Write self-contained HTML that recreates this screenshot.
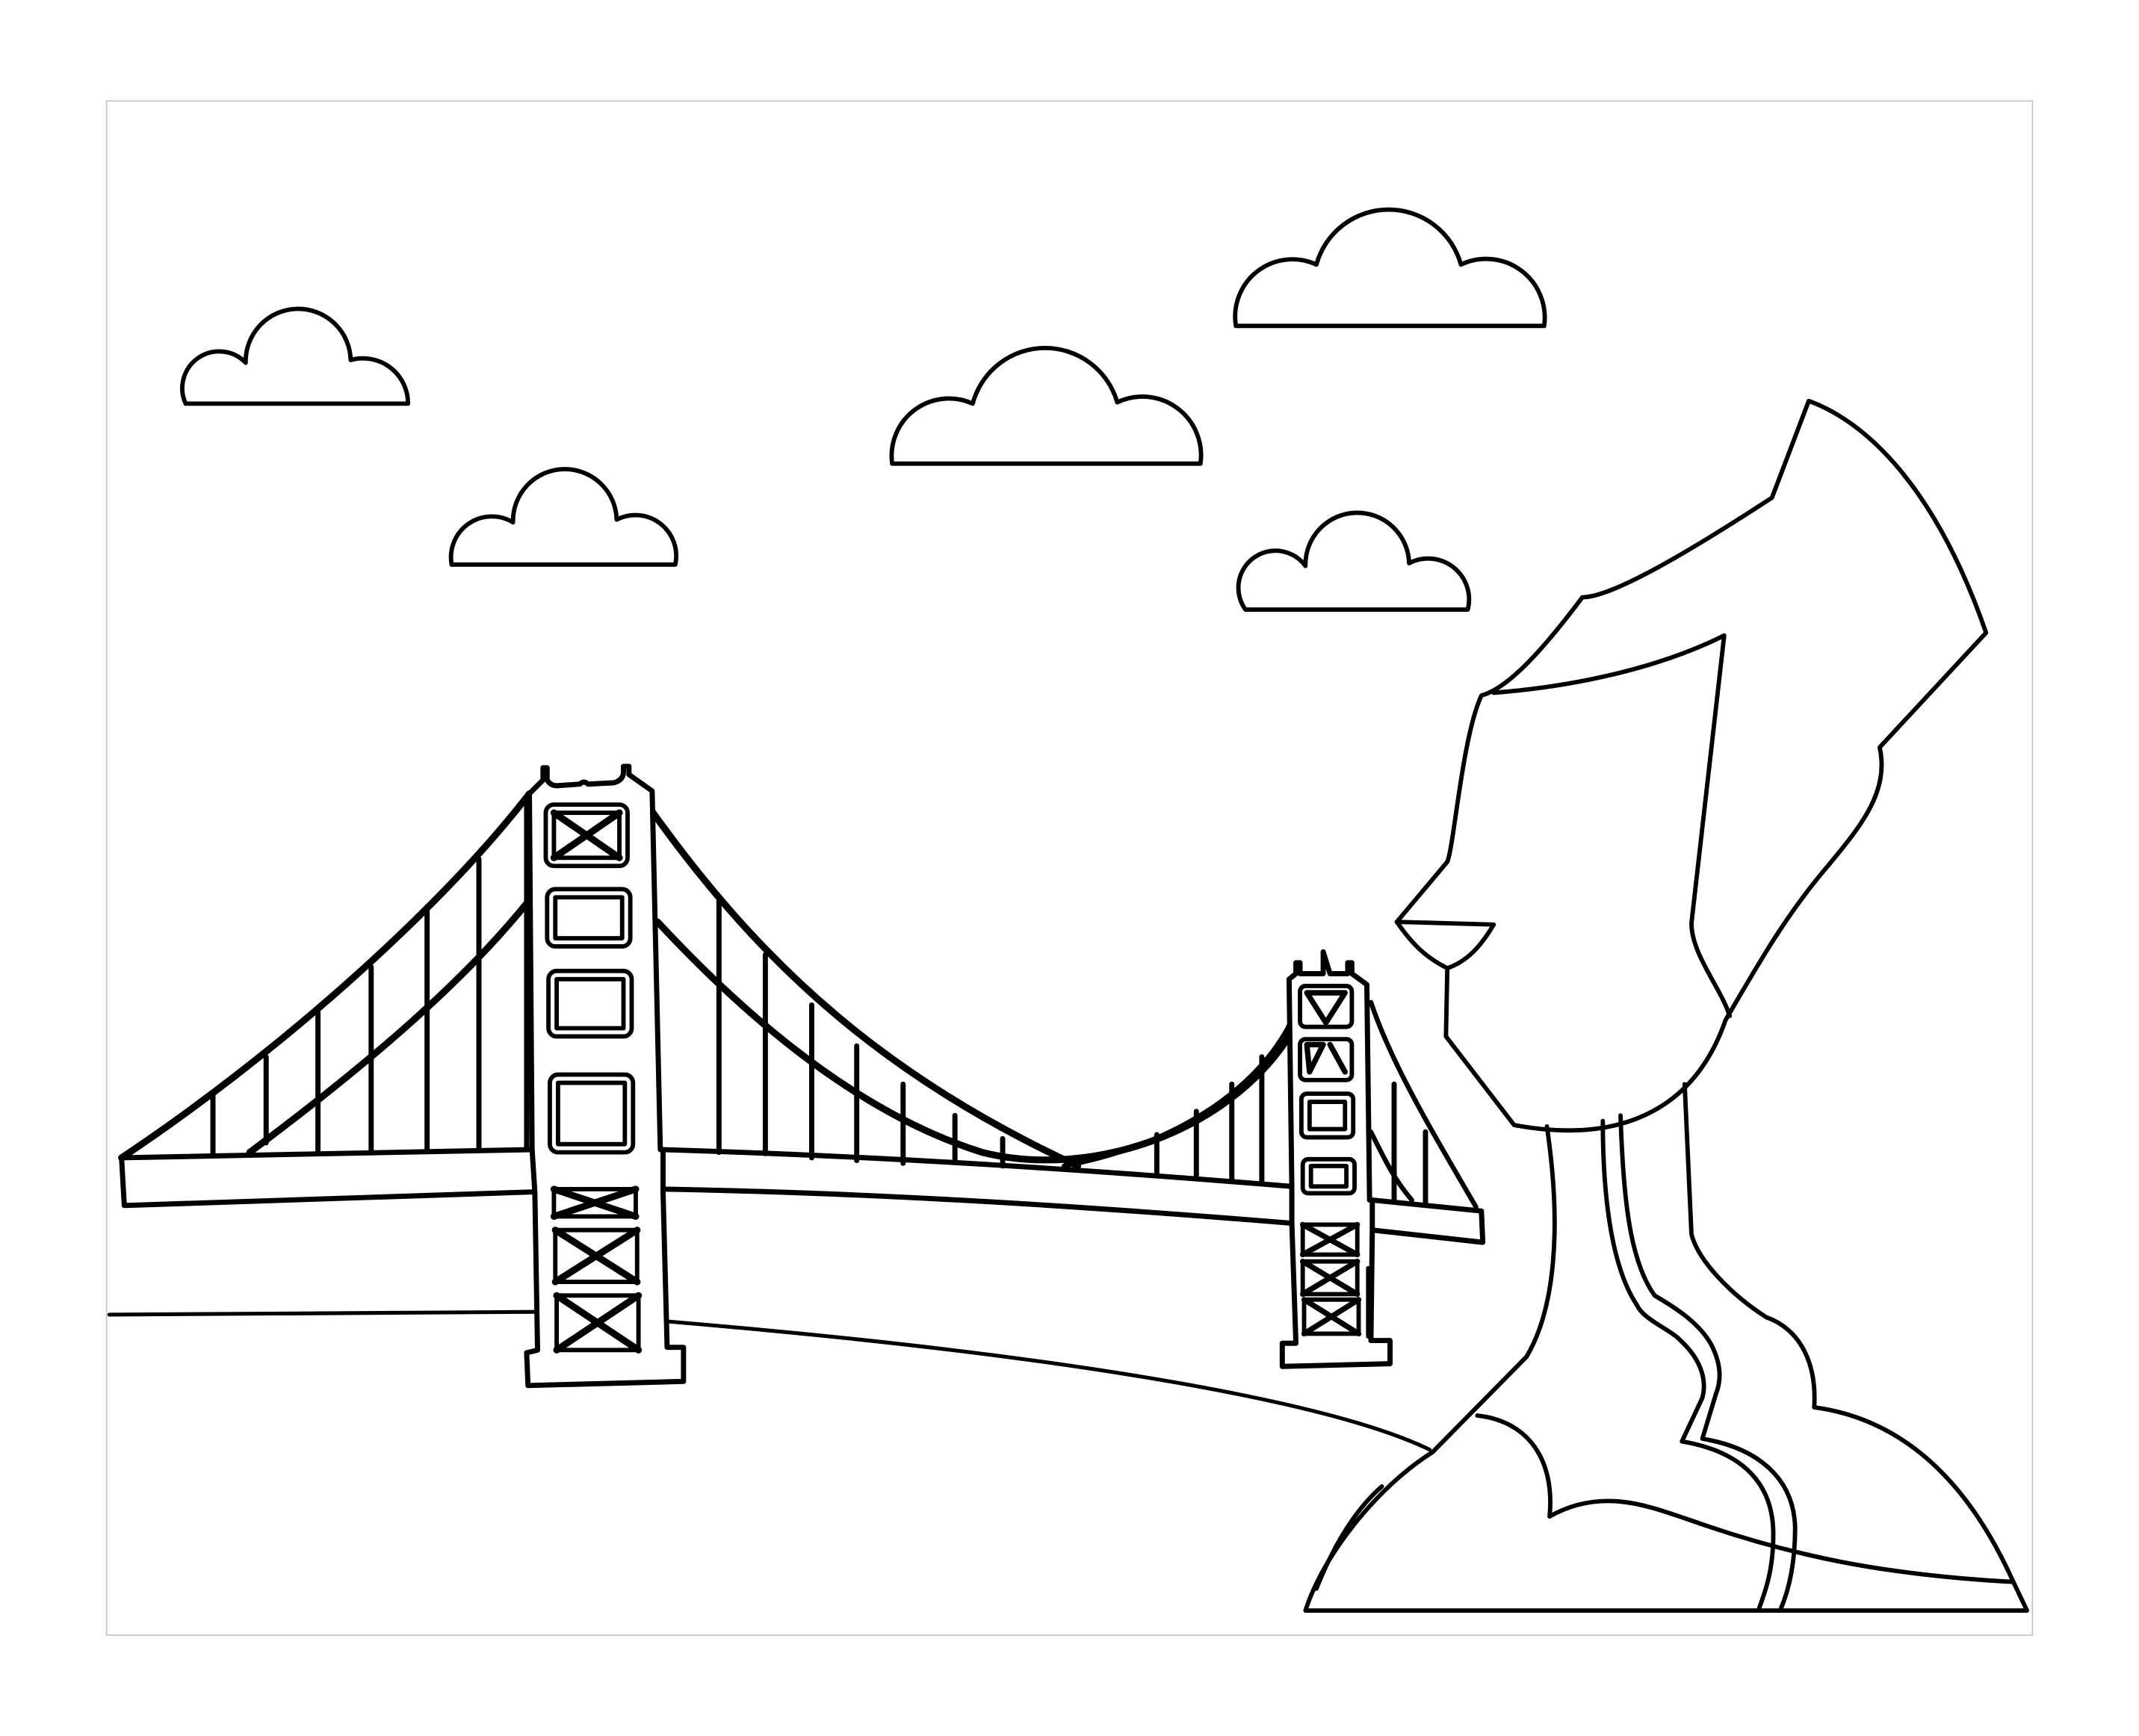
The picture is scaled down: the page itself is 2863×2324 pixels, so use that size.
<!DOCTYPE html>
<html><head><meta charset="utf-8"><style>
html,body{margin:0;padding:0;background:#fff;}
svg{display:block;}
</style></head><body>
<svg width="2863" height="2324" viewBox="0 0 1568 1273" xmlns="http://www.w3.org/2000/svg">
<rect x="0" y="0" width="1568" height="1273" fill="#fff"/>
<rect x="78" y="74" width="1412" height="1125" fill="none" stroke="#c8c8c8" stroke-width="1"/>
<g fill="none" stroke="#000" stroke-width="3.2" stroke-linejoin="round" stroke-linecap="round">
<!-- clouds -->
<path d="M136,296 A27,27 0 0 1 180,266 A38,38 0 0 1 257,264 A33,33 0 0 1 299,296 Z"/>
<path d="M331,414 A30,30 0 0 1 376,383 A37,37 0 0 1 452,381 A30,30 0 0 1 495,414 Z"/>
<path d="M654,340 A42,42 0 0 1 713,296 A55,55 0 0 1 819,295 A43,43 0 0 1 880,340 Z"/>
<path d="M906,239 A42,42 0 0 1 965,194 A55,55 0 0 1 1071,194 A43,43 0 0 1 1132,239 Z"/>
<path d="M913,447 A27,27 0 0 1 957,415 A38,38 0 0 1 1033,413 A30,30 0 0 1 1076,447 Z"/>

<!-- water line -->
<path d="M80,964 L392,962" stroke-width="2.8"/>
<path d="M489,969 C800,995 980,1030 1048,1063" stroke-width="2.8"/>

<!-- cables -->
<path d="M89,849 C200,775 320,670 388,582" stroke-width="5"/>
<path d="M183,845 C270,780 340,720 388,660" stroke-width="5"/>
<path d="M478,595 C560,710 650,790 790,855" stroke-width="5"/>
<path d="M482,676 C560,760 640,820 720,845 C800,865 900,830 945,760" stroke-width="5"/>
<path d="M780,855 C860,840 920,800 945,752" stroke-width="3.5"/>
<path d="M1005,735 C1020,780 1050,830 1082,885" stroke-width="3.5"/>
<path d="M1005,830 C1015,850 1022,865 1035,880" stroke-width="3.5"/>

<!-- hangers left -->
<path d="M156,803 V847 M195,775 V838 M233,742 V845 M272,709 V844 M313,668 V843 M351,630 V843 M386,588 V843" stroke-width="3.8"/>
<!-- hangers middle -->
<path d="M527,660 V845 M561,700 V846 M595,737 V849 M628,767 V851 M662,795 V853 M700,818 V852 M735,835 V855 M848,832 V860 M877,815 V862 M903,795 V865 M925,775 V867 M1022,795 V880 M1045,830 V882" stroke-width="3.8"/>

<!-- deck -->
<path d="M89,849 L390,843 M486,843 C650,848 800,858 947,870 M1006,880 L1086,888 L1087,911 L1006,902 M89,849 L91,884 L392,874 M488,872 C650,875 800,885 947,897" stroke-width="3.8"/>

<!-- left tower -->
<path fill="#fff" stroke-width="3.8" d="M388,582 L398,572 L398,563 L401,563 L401,572 Q404,577 410,576 L425,575 Q428,572 431,575 L450,574 Q457,572 457,566 L457,562 L461,562 L461,568 L478,580 L484,843 L486,843 L486,874 L489,988 L501,988 L501,1013 L387,1016 L386,992 L394,990 L392,874 L390,843 Z"/>
<rect x="400" y="590" width="60" height="45" rx="6"/>
<rect x="406" y="596" width="48" height="33"/>
<path d="M406,596 L454,629 M454,596 L406,629" stroke-width="5"/>
<rect x="401" y="652" width="61" height="42" rx="6"/>
<rect x="407" y="658" width="49" height="30"/>
<rect x="402" y="712" width="61" height="48" rx="6"/>
<rect x="408" y="718" width="49" height="36"/>
<rect x="403" y="788" width="61" height="57" rx="6"/>
<rect x="409" y="794" width="49" height="45"/>
<rect x="406" y="872" width="60" height="20"/>
<path d="M406,872 L466,892 M466,872 L406,892" stroke-width="5"/>
<rect x="407" y="902" width="60" height="38"/>
<path d="M407,902 L467,940 M467,902 L407,940" stroke-width="5"/>
<rect x="408" y="950" width="60" height="40"/>
<path d="M408,950 L468,990 M468,950 L408,990" stroke-width="5"/>

<!-- right tower -->
<path fill="#fff" stroke-width="3.8" d="M945,718 L950,714 L950,706 L953,706 L953,714 L970,714 L970,698 L975,714 L988,714 L988,706 L991,706 L991,714 L1002,722 L1004,880 L1006,880 L1006,902 L1005,983 L1019,983 L1019,1000 L940,1002 L940,985 L950,985 L947,897 L947,870 Z"/>
<rect x="953" y="723" width="38" height="30" rx="4"/>
<path d="M958,728 L986,728 L972,750 Z" stroke-width="4"/>
<rect x="953" y="762" width="38" height="30" rx="4"/>
<path d="M958,766 L970,766 L960,786 Z M975,766 L986,786" stroke-width="4"/>
<rect x="954" y="802" width="38" height="32" rx="4"/>
<rect x="960" y="808" width="26" height="20"/>
<rect x="955" y="850" width="38" height="25" rx="4"/>
<rect x="961" y="855" width="26" height="15"/>
<rect x="955" y="898" width="40" height="22"/>
<path d="M955,898 L995,920 M995,898 L955,920" stroke-width="4"/>
<rect x="955" y="925" width="40" height="24"/>
<path d="M955,925 L995,949 M995,925 L955,949" stroke-width="4"/>
<rect x="956" y="953" width="40" height="25"/>
<path d="M956,953 L996,978 M996,953 L956,978" stroke-width="4"/>
<path d="M1003,930 V980"/>

<!-- face/cliff -->
<path fill="#fff" d="M1326,294 L1299,365 C1230,410 1180,438 1160,438 C1130,478 1105,505 1086,510 C1072,540 1066,620 1061,632 L1024,676 C1035,692 1045,702 1061,710 L1060,760 L1110,825 C1180,838 1240,820 1265,748 C1290,705 1310,670 1340,635 C1365,605 1385,580 1378,548 L1456,464 C1420,360 1370,310 1326,294 Z"/>
<path d="M1095,508 C1160,503 1220,488 1264,466 L1240,677 C1240,700 1262,725 1268,745"/>
<path d="M1024,676 L1095,678 C1085,695 1075,705 1061,710"/>
<!-- neck and rocks -->
<path d="M1134,826 C1145,900 1140,960 1119,995 L1050,1065 C1010,1090 970,1140 957,1181 L1486,1181 L1476,1160 C1440,1080 1390,1040 1330,1032 C1332,1000 1320,975 1295,966 C1270,950 1245,925 1240,905 L1235,795"/>
<path d="M1175,822 C1175,880 1182,930 1200,957 C1205,968 1225,975 1232,983 C1245,995 1252,1010 1248,1025 L1233,1057 C1280,1065 1300,1090 1300,1125 C1300,1150 1295,1165 1289,1181"/>
<path d="M1188,818 C1190,880 1195,925 1213,950 C1230,960 1245,970 1254,985 C1262,1000 1262,1012 1258,1022 L1248,1055 C1290,1062 1315,1085 1316,1120 C1316,1145 1312,1165 1305,1181"/>
<path d="M1083,1038 C1120,1042 1140,1070 1136,1112 C1175,1090 1210,1105 1240,1115 C1310,1140 1380,1155 1476,1160"/>
<path d="M1013,1090 C990,1110 975,1140 965,1165"/>
</g>
</svg>
</body></html>
